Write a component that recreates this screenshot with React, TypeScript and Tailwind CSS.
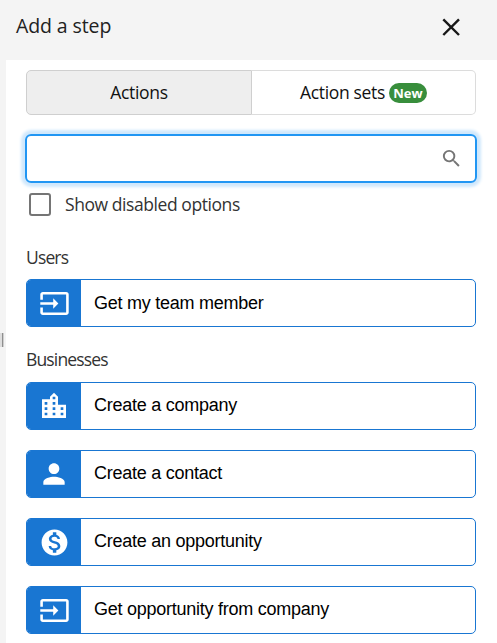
import type { ReactNode } from "react";
import { MdInput, MdLocationCity, MdMonetizationOn, MdPerson, MdSearch } from "react-icons/md";

function Row({ icon, children }: { icon: ReactNode; children: ReactNode }) {
  return (
    <button className="flex h-12 w-full shrink-0 overflow-hidden rounded-[5px] border border-[#1976d2] bg-white text-left">
      <span className="flex h-full w-[54px] shrink-0 items-center justify-center bg-[#1976d2] text-white">{icon}</span>
      <span className="pt-[9px] pl-[13px] font-['Liberation_Sans',Arial,sans-serif] text-[18px] leading-[26px] tracking-[-0.25px] whitespace-nowrap text-black">
        {children}
      </span>
    </button>
  );
}

export default function App() {
  return (
    <div className="flex h-[643px] w-[497px] flex-col overflow-hidden bg-[#f4f4f4] font-['Open_Sans','Noto_Sans',sans-serif] text-[#212121]">
      <header className="flex h-[60px] shrink-0 items-start justify-between pt-3 pr-9 pl-4">
        <h1 className="text-[19.5px] leading-[28px] tracking-[-0.1px] whitespace-nowrap">Add a step</h1>
        <button aria-label="Close" className="mt-[5px]">
          <svg width="20" height="20" viewBox="0 0 20 20" fill="none" stroke="#171717" strokeWidth="2.4">
            <path d="M2.3 2.3 18 18M18 2.3 2.3 18" />
          </svg>
        </button>
      </header>
      <div className="flex min-h-0 flex-1">
        <div className="flex w-1.5 shrink-0 flex-col pt-[273px]">
          <div className="flex h-[14px]">
            <div className="w-0.5 bg-[#dedede]" />
            <div className="w-px bg-[#8f8f8f]" />
            <div className="w-px bg-[#cfcfcf]" />
          </div>
        </div>
        <main className="flex min-w-0 flex-1 flex-col bg-white px-5 pt-[10px]">
          <div className="flex h-[45px] w-[450px] shrink-0 text-[17.5px] tracking-[-0.3px] text-[#111]">
            <button className="flex w-[226px] items-center justify-center rounded-l-[5px] border border-[#cfcfcf] bg-[#eee]">Actions</button>
            <button className="flex flex-1 items-center justify-center gap-1 rounded-r-[5px] border border-l-0 border-[#dcdcdc]">
              <span className="tracking-[-0.35px] whitespace-nowrap">Action sets</span>
              <span className="mt-px flex h-5 w-[38px] items-center justify-center rounded-full bg-[#388e3c] pt-px text-[13px] font-bold tracking-[-0.1px] text-white">New</span>
            </button>
          </div>
          <div className="mt-[19px] -ml-px flex h-[49px] w-[452px] shrink-0 items-center justify-end rounded-md border-2 border-[#2196f3] pr-3 shadow-[0_0_3px_4px_#d0e8fc]">
            <MdSearch size={23} color="#757575" />
          </div>
          <label className="mt-[10px] ml-[3px] flex h-[23px] shrink-0 items-center">
            <span className="h-[23px] w-[22px] rounded-[3px] border-2 border-[#757575]" />
            <span className="ml-[14px] text-[17.5px] tracking-[-0.43px] whitespace-nowrap text-[#333]">Show disabled options</span>
          </label>
          <h2 className="mt-[29px] mb-[10px] h-6 shrink-0 text-[17.5px] leading-6 tracking-[-0.85px] text-[#333]">Users</h2>
          <div className="flex w-[450px] shrink-0 flex-col [&_button>span:last-child]:pt-[10px]">
            <Row icon={<MdInput size={31} />}>Get my team member</Row>
          </div>
          <h2 className="mt-5 mb-[11px] h-6 shrink-0 text-[17.5px] leading-6 tracking-[-0.85px] text-[#333]">Businesses</h2>
          <div className="flex w-[450px] shrink-0 flex-col gap-5">
            <Row icon={<MdLocationCity size={32} />}>Create a company</Row>
            <Row icon={<MdPerson size={32} />}>Create a contact</Row>
            <Row icon={<MdMonetizationOn size={31} />}>Create an opportunity</Row>
            <Row icon={<MdInput size={31} />}>Get opportunity from company</Row>
          </div>
        </main>
      </div>
    </div>
  );
}
